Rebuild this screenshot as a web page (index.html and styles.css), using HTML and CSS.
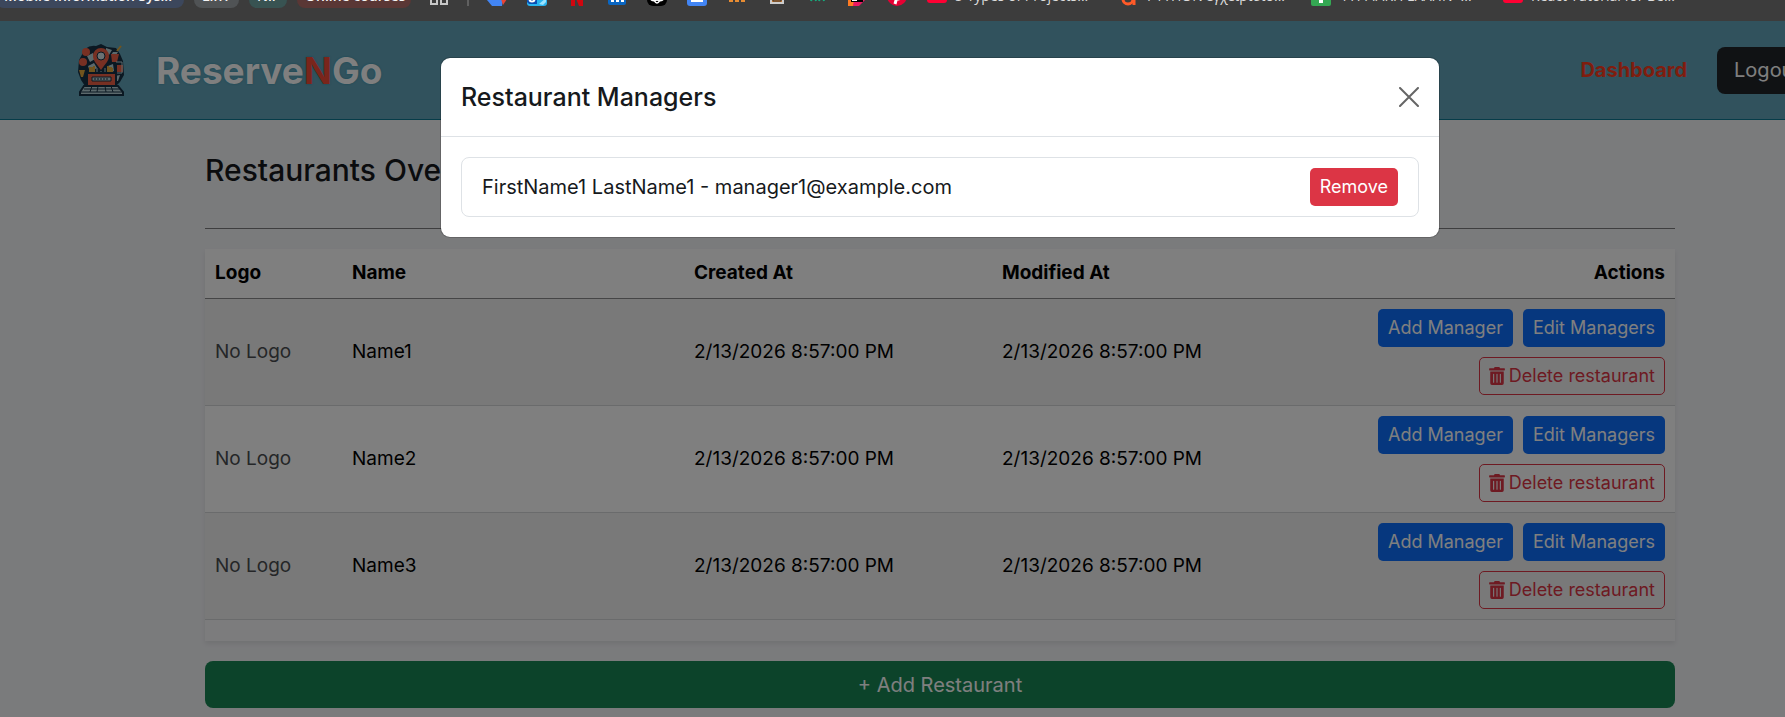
FILE: index.html
```html
<!DOCTYPE html>
<html lang="en">
<head>
<meta charset="utf-8">
<title>ReserveNGo</title>
<link rel="stylesheet" href="styles.css">
</head>
<body>
<svg class="defs" aria-hidden="true">
  <symbol id="trash" viewBox="0 0 448 512"><path fill="currentColor" d="M32 464a48 48 0 0 0 48 48h288a48 48 0 0 0 48-48V128H32zm272-256a16 16 0 0 1 32 0v224a16 16 0 0 1-32 0zm-96 0a16 16 0 0 1 32 0v224a16 16 0 0 1-32 0zm-96 0a16 16 0 0 1 32 0v224a16 16 0 0 1-32 0zM432 32H312l-9.4-18.7A24 24 0 0 0 281.1 0H166.8a23.72 23.72 0 0 0-21.4 13.3L136 32H16A16 16 0 0 0 0 48v32a16 16 0 0 0 16 16h416a16 16 0 0 0 16-16V48a16 16 0 0 0-16-16z"/></symbol>
</svg>

<nav class="bookmarks" aria-label="Bookmarks">
  <div class="groups">
    <button class="chip chip-blue" type="button">Mobile Information Sys...</button>
    <button class="chip chip-gray" type="button">LinT</button>
    <button class="chip chip-teal" type="button">Nil</button>
    <button class="chip chip-red" type="button">Online courses</button>
  </div>
  <svg class="apps" viewBox="0 0 20 20"><g fill="none" stroke="#c8c8c8" stroke-width="2"><path d="M2 2h6v6H2zM12 2h6v6h-6zM2 12h6v6H2zM12 12h6v6h-6z"/></g></svg>
  <span class="divider"></span>
  <div class="icons">
    <svg viewBox="0 0 20 20"><path fill="#4285f4" d="M4 13h12l-1 7H5L0 14z"/><path fill="#fbbc04" d="M7 2h6l6 11h-6z"/><path fill="#ea4335" d="M14 13h6l-4 6z"/></svg>
    <svg viewBox="0 0 20 20"><rect width="20" height="20" rx="3" fill="#28b4f0"/><path fill="#0a4fb4" d="M0 9h10v9H2l-2-2z"/><circle cx="5" cy="13" r="2.500" fill="none" stroke="#fff" stroke-width="2"/><path fill="#9be3ff" d="M12 18l7-6v4l-3 3z"/></svg>
    <svg viewBox="0 0 20 20"><path fill="#d1060f" d="M4 0h4l8 20h-4zM4 0h4v20H4zM12 0h4v20h-4z"/></svg>
    <svg viewBox="0 0 20 20"><rect x="1" width="18" height="19" rx="2" fill="#0a66c2"/><path fill="#fff" d="M4 7h3v9H4zM9 7h3v9H9zM14 9h3v7h-3z"/></svg>
    <svg viewBox="0 0 20 20"><rect width="20" height="20" rx="6" fill="#000"/><g fill="none" stroke="#fff" stroke-width="1.500"><ellipse cx="10" cy="10" rx="3.500" ry="7"/><ellipse cx="10" cy="10" rx="3.500" ry="7" transform="rotate(60 10 10)"/><ellipse cx="10" cy="10" rx="3.500" ry="7" transform="rotate(120 10 10)"/></g></svg>
    <svg viewBox="0 0 20 20"><rect width="20" height="20" rx="3" fill="#4285f4"/><path fill="#fff" d="M4 7h10v4h2v5H4z"/></svg>
    <svg viewBox="0 0 20 20"><path fill="#e88c32" d="M2 4h4v12H2zM8 4h4v12H8zM14 4h4v12h-4z"/></svg>
    <svg viewBox="0 0 20 20"><path fill="#c8772c" stroke="#ccc" stroke-width="2" d="M4 2h12v15H4z"/><path fill="none" stroke="#333" d="M6 4h8v11H6z"/></svg>
    <svg viewBox="0 0 20 20"><path fill="none" stroke="#15a97c" stroke-width="2" d="M4 15l3-8 2 8M12 15l3-8 2 8"/></svg>
    <svg viewBox="0 0 20 20"><path fill="#ff7b22" d="M1 0h10v20H1z"/><path fill="#ec1763" d="M9 0h10v13l-7 7H6z"/><path d="M4 2h12v14H4z"/><path fill="#fff" d="M5 13h5v2H5z"/></svg>
  </div>
  <svg class="pin" viewBox="0 0 20 20"><circle cx="10" cy="10" r="10" fill="#e60033"/><path fill="none" stroke="#fff" stroke-width="3" d="M8 18l3-11M8 10c-3-5 6-6 6-1 0 4-3 5-4 3"/></svg>
  <div class="links">
    <a href="#"><svg viewBox="0 0 20 20"><rect y="1" width="20" height="16" rx="3" fill="#ff0033"/></svg>5 Types of Projects...</a>
    <a href="#"><svg viewBox="0 0 20 20"><circle cx="9" cy="13" r="5" fill="none" stroke="#ff5a28" stroke-width="3"/><path stroke="#ff5a28" stroke-width="3" d="M15 7v12"/></svg>PYTHON εγχειρίδιο...</a>
    <a href="#"><svg viewBox="0 0 20 20"><rect width="20" height="20" rx="2" fill="#34a853"/><path fill="#fff" d="M8 4h4v13H8z"/></svg>ΨΗΦΙΑΚΗ ΕΛΛΗΝ -...</a>
    <a href="#"><svg viewBox="0 0 20 20"><rect y="1" width="20" height="16" rx="3" fill="#ff0033"/></svg>React Tutorial for Be...</a>
  </div>
</nav>

<div class="app">
  <header class="topbar">
    <a class="brand" href="#">
      <svg class="logo" viewBox="0 0 46 52">
        <path fill="#173044" d="M7 5q5-4 11-3l5-2 6 3 9 1 4 6 3 7 1 14-4 7-4 4H7l-4-6-3-8 1-12z"/>
        <path fill="#b8d3d8" d="M9 12l6-3 2 6-5 3zM28 4l6 2-3 5-3-2zM35 8h5l-2 3h-5zM10 22l6-3 3 5-7 4zM30 22l5-2 1 7-5 2zM37 32l5-1-2 6h-3z"/>
        <circle cx="8" cy="8" r="4" fill="#ef6046"/>
        <circle cx="5" cy="18" r="4" fill="#ef6046"/>
        <path fill="#ef6046" d="M33 10h8l-2 8h-5zM39 21h6v7h-6zM15 12a8 8 0 0 1 16 0c0 5-4 8-8 14-4-6-8-9-8-14z"/>
        <path stroke="#e2a83c" stroke-width="2" d="M39 7l4-5M12 24v6M16 22v7M30 22v7M34 24v6"/>
        <path fill="#e2a83c" d="M1 26h6l-2 7H3zM11 23h5v6h-5zM29 23h5v6h-5z"/>
        <path stroke="#b8d3d8" d="M19 24v6M23 27v4M27 24v6M38 18h6v11h-6" fill="none"/>
        <circle cx="23" cy="12" r="4" fill="#d7e5e8" stroke="#173044"/>
        <path fill="#ef6046" stroke="#173044" stroke-width="2" d="M9 29h29v13H9z"/>
        <path fill="#b8d3d8" stroke="#173044" d="M14 33h19v4H14z"/>
        <path stroke="#173044" stroke-dasharray="2 1" d="M16 35h15"/>
        <path fill="#b8d3d8" stroke="#173044" stroke-width="2" d="M6 42h34l5 6v3H2v-3z"/>
        <path stroke="#173044" d="M2 48h43M6 45h36M14 42l-2 6M20 42l-1 6M27 42l1 6M33 42l2 6"/>
      </svg>
      <span class="wordmark">Reserve<span class="accent">N</span>Go</span>
    </a>
    <nav class="menu">
      <a class="current" href="#">Dashboard</a>
      <button class="btn btn-dark" type="button">Logout</button>
    </nav>
  </header>

  <main class="content">
    <h1 class="title">Restaurants Overview</h1>
    <hr class="rule">
    <div class="table-card">
      <table class="table">
        <colgroup><col class="c-logo"><col class="c-name"><col class="c-date"><col class="c-date"><col></colgroup>
        <thead>
          <tr><th>Logo</th><th>Name</th><th>Created At</th><th>Modified At</th><th class="end">Actions</th></tr>
        </thead>
        <tbody>
          <tr>
            <td class="muted">No Logo</td><td>Name1</td><td>2/13/2026 8:57:00 PM</td><td>2/13/2026 8:57:00 PM</td>
            <td><div class="actions"><button class="btn btn-sm btn-primary" type="button">Add Manager</button><button class="btn btn-sm btn-primary" type="button">Edit Managers</button><button class="btn btn-sm btn-outline" type="button"><svg class="trash"><use href="#trash"/></svg>Delete restaurant</button></div></td>
          </tr>
          <tr>
            <td class="muted">No Logo</td><td>Name2</td><td>2/13/2026 8:57:00 PM</td><td>2/13/2026 8:57:00 PM</td>
            <td><div class="actions"><button class="btn btn-sm btn-primary" type="button">Add Manager</button><button class="btn btn-sm btn-primary" type="button">Edit Managers</button><button class="btn btn-sm btn-outline" type="button"><svg class="trash"><use href="#trash"/></svg>Delete restaurant</button></div></td>
          </tr>
          <tr>
            <td class="muted">No Logo</td><td>Name3</td><td>2/13/2026 8:57:00 PM</td><td>2/13/2026 8:57:00 PM</td>
            <td><div class="actions"><button class="btn btn-sm btn-primary" type="button">Add Manager</button><button class="btn btn-sm btn-primary" type="button">Edit Managers</button><button class="btn btn-sm btn-outline" type="button"><svg class="trash"><use href="#trash"/></svg>Delete restaurant</button></div></td>
          </tr>
        </tbody>
      </table>
    </div>
    <button class="btn btn-success" type="button">+ Add Restaurant</button>
  </main>

  <div class="backdrop">
    <section class="modal" role="dialog" aria-labelledby="modal-title">
      <header class="modal-header">
        <h2 class="modal-title" id="modal-title">Restaurant Managers</h2>
        <button class="close" type="button" aria-label="Close"><svg viewBox="0 0 20 20"><path fill="none" stroke="#000" stroke-width="2" stroke-linecap="round" d="M1 1l18 18M19 1L1 19"/></svg></button>
      </header>
      <div class="modal-body">
        <ul class="managers">
          <li><span>FirstName1 LastName1 - manager1@example.com</span><button class="btn btn-sm btn-danger" type="button">Remove</button></li>
        </ul>
      </div>
    </section>
  </div>
</div>
</body>
</html>
```

FILE: styles.css
```css
* { box-sizing: border-box; }

body {
  margin: 0;
  overflow: hidden;
  background: #3c3c3c;
  color: #16191c;
  font: 400 20px/30px Inter, "Liberation Sans", sans-serif;
}

.defs { position: absolute; width: 0; height: 0; }

/* Browser bookmarks strip, scrolled partly out of view */
.bookmarks {
  display: flex;
  align-items: flex-end;
  height: 21px;
  padding-bottom: 13px;
  overflow: hidden;
  background: #3c3c3c;
  font: 400 14px/20px "Open Sans", "Noto Sans", sans-serif;
}
.groups { display: flex; gap: 10px; margin-left: -4px; }
.chip {
  flex: none;
  height: 24px;
  padding: 0 8px 1px;
  border: 0;
  border-radius: 8px;
  color: #f4f4f4;
  font: 600 14px/20px "Open Sans", "Noto Sans", sans-serif;
  text-align: left;
  white-space: nowrap;
  overflow: hidden;
}
.chip-blue { width: 188px; background: #3c475c; }
.chip-gray { width: 45px; background: #505355; }
.chip-teal { width: 38px; background: #385352; }
.chip-red { width: 114px; background: #5a3735; }
.bookmarks svg { flex: none; display: block; width: 20px; height: 20px; }
.bookmarks .apps { margin: 0 18px 2px; }
.divider { flex: none; width: 2px; height: 22px; margin-bottom: 2px; background: #606060; }
.icons { display: flex; gap: 20px; margin: 0 20px 2px 18px; }
.bookmarks .pin { margin: 0 20px 2px 0; }
.links { display: flex; margin-bottom: 2px; }
.links a {
  display: flex;
  align-items: flex-end;
  gap: 8px;
  width: 192px;
  height: 20px;
  color: #dcdcdc;
  text-decoration: none;
  white-space: nowrap;
}

/* The application is wider than the window and runs off its right edge */
.app {
  position: relative;
  width: calc(100% + 95px);
  min-height: calc(100vh - 21px);
  background: #f5f6f9;
}

.topbar {
  display: flex;
  align-items: center;
  justify-content: space-between;
  height: 99px;
  padding: 0 63px 0 78px;
  border-bottom: 1px solid #0d7892;
  background: #62a4ba;
}
.brand { display: flex; align-items: center; gap: 32px; color: #fff; text-decoration: none; }
.logo { width: 46px; height: 52px; }
.wordmark { padding-top: 2px; font-size: 37px; font-weight: 700; line-height: 48px; text-shadow: 0 0 2px #258aa4; }
.accent { color: #f44a36; }
.menu { display: flex; align-items: center; gap: 30px; }
.current { color: #ff3b1d; font-weight: 700; text-decoration: none; }

.btn {
  display: inline-flex;
  align-items: center;
  justify-content: center;
  height: 47px;
  padding: 0 16px;
  border: 1px solid transparent;
  border-radius: 8px;
  color: #fff;
  font: 400 20px/30px Inter, "Liberation Sans", sans-serif;
  white-space: nowrap;
}
.btn-sm { height: 38px; padding: 0 9px; border-radius: 5px; font-size: 18px; line-height: 26px; }
.btn-dark { background: #212529; }
.btn-primary { background: #0d6efd; }
.btn-danger { background: #dc3545; }
.btn-outline { gap: 4px; border-color: #dc3545; background: transparent; color: #dc3545; }
.btn-success { width: 100%; background: #198754; }
.trash { width: 16px; height: 18px; }

.content { max-width: 1470px; margin: 0 auto; padding: 32px 0 8px; }
.title { margin: 0; font-size: 30px; font-weight: 500; line-height: 36px; }
.rule { height: 1px; margin: 40px 0 20px; border: 0; background: #7c7d7e; }
.table-card {
  margin-bottom: 20px;
  padding-bottom: 21px;
  background: #f8f9fa;
  box-shadow: 0 3px 5px rgba(0, 0, 0, .08);
}
.table { width: 100%; border-collapse: separate; border-spacing: 0; table-layout: fixed; background: #fff; color: #000; font-size: 19px; }
.c-logo { width: 137px; }
.c-name { width: 342px; }
.c-date { width: 308px; }
.table th, .table td { padding: 10px; border-bottom: 1px solid #d4d6d9; text-align: left; vertical-align: middle; }
.table th { height: 50px; padding: 9px 10px 10px; border-bottom-color: #8a8b8c; font-weight: 700; }
.table .end { text-align: right; }
.table tbody tr:nth-child(odd) { background: #f2f2f2; }
.table .muted { color: #4a4d50; }
.actions { display: flex; flex-wrap: wrap; justify-content: flex-end; gap: 10px; }

.backdrop {
  position: absolute;
  inset: 0;
  padding-top: 36px;
  background: rgba(0, 0, 0, .5);
}
.modal {
  max-width: 1000px;
  margin: 0 auto;
  border: 1px solid rgba(0, 0, 0, .18);
  border-radius: 10px;
  background: #fff;
  background-clip: padding-box;
}
.modal-header {
  display: flex;
  align-items: center;
  justify-content: space-between;
  padding: 20px;
  border-bottom: 1px solid #dee2e6;
}
.modal-title { margin: 0; font-size: 25px; font-weight: 500; line-height: 38px; }
.close { width: 20px; height: 20px; padding: 0; border: 0; background: none; opacity: .6; }
.close svg { display: block; width: 20px; height: 20px; }
.modal-body { padding: 20px; }
.managers { margin: 0; padding: 0; list-style: none; }
.managers li {
  display: flex;
  align-items: center;
  justify-content: space-between;
  padding: 10px 20px;
  border: 1px solid #dee2e6;
  border-radius: 8px;
}
```
